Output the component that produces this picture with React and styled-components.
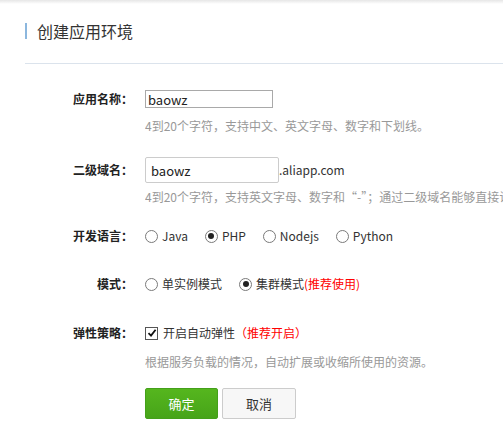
import React from 'react';
import styled, { createGlobalStyle } from 'styled-components';

const GlobalStyle = createGlobalStyle`
  html, body {
    margin: 0;
    padding: 0;
    background: #fff;
    overflow: hidden;
  }
  body {
    font-family: "Noto Sans CJK SC", "Noto Sans", sans-serif;
    font-size: 12px;
    color: #333;
  }
`;

const languages = ['Java', 'PHP', 'Nodejs', 'Python'];

const App = () => {
  return (
    <Page>
      <GlobalStyle />
      <Header>
        <Title>创建应用环境</Title>
      </Header>
      <Form>
        <Field $top={25}>
          <Label>应用名称：</Label>
          <Control>
            <PlainInput defaultValue="baowz" />
          </Control>
        </Field>
        <Hint $top={9}>4到20个字符，支持中文、英文字母、数字和下划线。</Hint>

        <Field $top={23}>
          <Label>二级域名：</Label>
          <Control>
            <DomainInput defaultValue="baowz" />
            <Suffix>.aliapp.com</Suffix>
          </Control>
        </Field>
        <Hint $top={6}>4到20个字符，支持英文字母、数字和“-”；通过二级域名能够直接访问您的应用。</Hint>

        <Field $top={21}>
          <Label>开发语言：</Label>
          <Control>
            {languages.map((lang) => (
              <Choice key={lang}>
                <Radio $checked={lang === 'PHP'} />
                {lang}
              </Choice>
            ))}
          </Control>
        </Field>

        <Field $top={28}>
          <Label>模式：</Label>
          <Control>
            <Choice>
              <Radio />
              单实例模式
            </Choice>
            <Choice>
              <Radio $checked />
              集群模式<Accent>(推荐使用)</Accent>
            </Choice>
          </Control>
        </Field>

        <Field $top={29}>
          <Label>弹性策略：</Label>
          <Control>
            <Choice>
              <CheckBox>
                <svg width="10" height="10" viewBox="0 0 10 10">
                  <path d="M1.5 5.2 L4 7.6 L8.6 1.8" fill="none" stroke="#111" strokeWidth="1.8" />
                </svg>
              </CheckBox>
              开启自动弹性<Accent>（推荐开启）</Accent>
            </Choice>
          </Control>
        </Field>
        <Hint $top={11}>根据服务负载的情况，自动扩展或收缩所使用的资源。</Hint>

        <Actions>
          <PrimaryButton>确定</PrimaryButton>
          <Button>取消</Button>
        </Actions>
      </Form>
    </Page>
  );
};

const Page = styled.div`
  width: 503px;
  height: 438px;
  box-sizing: border-box;
  padding-left: 25px;
  overflow: hidden;
  background: linear-gradient(#e6e6e6, #fff 4px);
`;

const Header = styled.div`
  padding-top: 23px;
  padding-bottom: 24px;
  border-bottom: 1px solid #dbe3ec;
`;

const Title = styled.h2`
  margin: 0;
  padding-left: 10px;
  border-left: 2px solid #8cb7de;
  font-size: 16px;
  font-weight: normal;
  line-height: 16px;
  color: #333;
`;

const Form = styled.div`
  display: flex;
  flex-direction: column;
`;

const Field = styled.div`
  display: flex;
  align-items: center;
  margin-top: ${(p) => p.$top}px;
`;

const Label = styled.div`
  width: 108px;
  flex-shrink: 0;
  text-align: right;
  font-weight: bold;
  font-size: 12px;
  line-height: 20px;
  color: #222;
`;

const Control = styled.div`
  display: flex;
  align-items: center;
  margin-left: 12px;
  line-height: 20px;
`;

const PlainInput = styled.input`
  width: 128px;
  height: 18px;
  box-sizing: border-box;
  margin: 0;
  padding: 0 2px;
  border: 1px solid #a9a9a9;
  font-family: inherit;
  font-size: 13px;
  color: #222;
  outline: none;
`;

const DomainInput = styled(PlainInput)`
  width: 134px;
  height: 26px;
  padding: 0 5px;
  border: 1px solid #ccc;
  border-radius: 2px;
`;

const Suffix = styled.span`
  font-size: 12px;
  color: #333;
`;

const Hint = styled.div`
  margin-top: ${(p) => p.$top}px;
  margin-left: 120px;
  line-height: 16px;
  font-size: 12px;
  color: #999;
  white-space: nowrap;
  overflow: hidden;
`;

const Choice = styled.label`
  display: inline-flex;
  align-items: center;
  margin-right: 17px;
  font-size: 12px;
  color: #333;
`;

const Radio = styled.span`
  position: relative;
  width: 11px;
  height: 11px;
  margin-right: 4px;
  border: 1px solid #7a7a7a;
  border-radius: 50%;
  background: #fff;

  &::after {
    content: '';
    display: ${(p) => (p.$checked ? 'block' : 'none')};
    position: absolute;
    top: 2.5px;
    left: 2.5px;
    width: 6px;
    height: 6px;
    border-radius: 50%;
    background: #222;
  }
`;

const CheckBox = styled.span`
  display: flex;
  align-items: center;
  justify-content: center;
  width: 11px;
  height: 11px;
  margin-right: 5px;
  border: 1px solid #555;
  background: #fff;
`;

const Accent = styled.span`
  color: #f00;
`;

const Actions = styled.div`
  display: flex;
  gap: 4px;
  margin-top: 18px;
  margin-left: 120px;
`;

const Button = styled.button`
  width: 74px;
  height: 31px;
  box-sizing: border-box;
  border: 1px solid #ccc;
  border-radius: 2px;
  background: #f7f7f7;
  font-family: inherit;
  font-size: 13px;
  color: #333;
  cursor: pointer;
`;

const PrimaryButton = styled(Button)`
  width: 73px;
  border-color: #44a01a;
  background: linear-gradient(#55b61e, #47a419);
  color: #fff;
`;

export default App;
